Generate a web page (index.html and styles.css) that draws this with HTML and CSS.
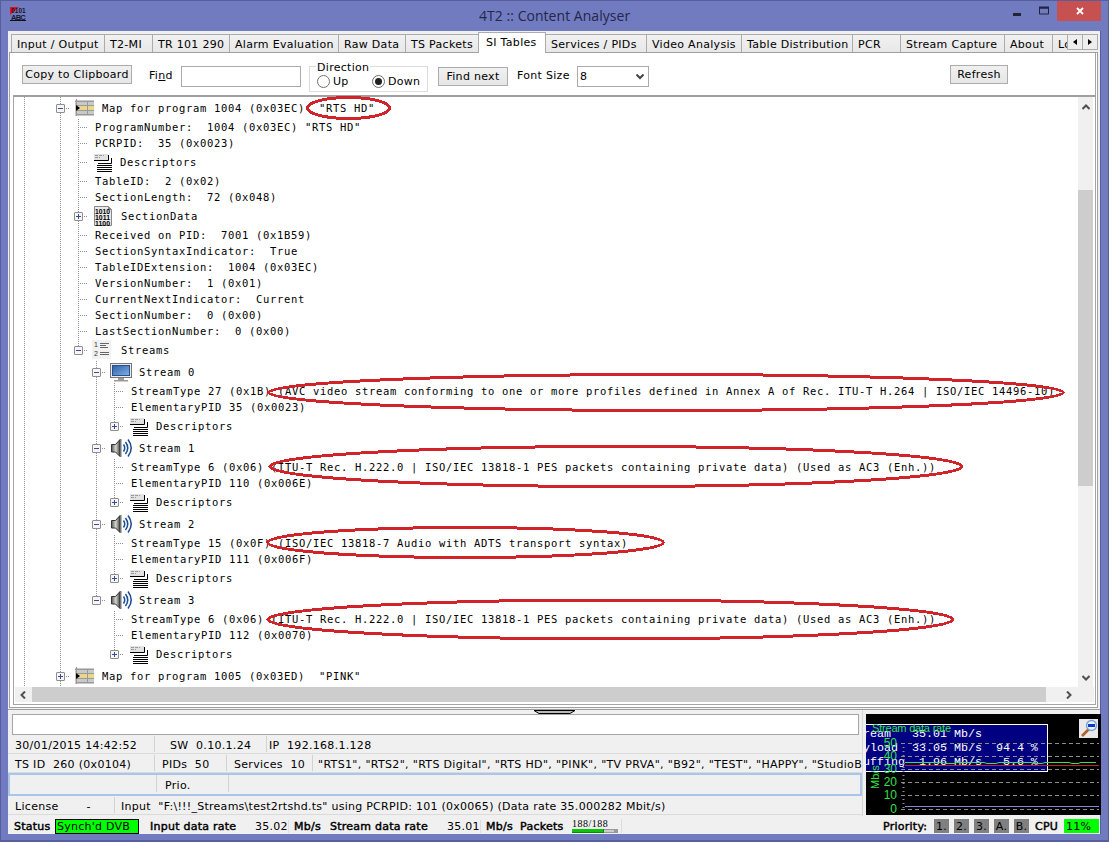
FILE: index.html
```html
<!DOCTYPE html>
<html lang="en">
<head>
<meta charset="utf-8">
<title>4T2 :: Content Analyser</title>
<link rel="stylesheet" href="styles.css">
</head>
<body>
<svg class="defs" width="0" height="0">
  <defs>
    <linearGradient id="scr" x1="0" y1="0" x2="1" y2="1"><stop offset="0" stop-color="#2f5fa8"/><stop offset="1" stop-color="#7fb0e6"/></linearGradient>
    <linearGradient id="spk" x1="0" y1="0" x2="1" y2="0"><stop offset="0" stop-color="#555"/><stop offset=".5" stop-color="#d5d8d2"/><stop offset="1" stop-color="#444"/></linearGradient>
    <symbol id="i-map" viewBox="0 0 33 22"><rect x="6" y="3" width="19" height="16" fill="#c9c9c9"/><rect x="8" y="9" width="17" height="4" fill="#ecd58c"/><path d="M6 4.500h19M7 8.500h18M7 13.500h18M7 17.500h18M7.500 2v17M18.500 4v14" stroke="#999" fill="none"/><path d="M7 8v6l4-3z" fill="#000"/></symbol>
    <symbol id="i-desc" viewBox="0 0 33 22"><path d="M7 3h14v7H7z" fill="#e2e2e2"/><path d="M8 4.500h9M8 6.500h5" stroke="#999" stroke-dasharray="3 1" fill="none"/><path d="M7 9.500h14.500V4" stroke="#000" fill="none"/><path d="M11 12.500h13.500V7" stroke="#000" fill="none"/><path d="M10 14.500h15M10 16.500h15M10 18.500h15M10 20.500h15" stroke="#000" fill="none"/></symbol>
    <symbol id="i-data" viewBox="0 0 33 22"><path d="M7.500 1.500h14l3 3v16h-17z" fill="#e9e9e9" stroke="#888"/><path d="M21 1v4h4z" fill="#888"/><g font-family="Liberation Sans" font-size="7.500" font-weight="bold" fill="#000" letter-spacing="0"><text x="8" y="8.500" textLength="15" lengthAdjust="spacingAndGlyphs">1010</text><text x="8" y="14.500" textLength="15" lengthAdjust="spacingAndGlyphs">1011</text><text x="8" y="20.500" textLength="15" lengthAdjust="spacingAndGlyphs">1100</text></g></symbol>
    <symbol id="i-list" viewBox="0 0 33 22"><path d="M5 1h19v19H5z" fill="#f1f1f1"/><g font-family="Liberation Sans" font-size="7" fill="#333"><text x="7" y="8">1</text><text x="7" y="17">2</text></g><path d="M13 4.500h9M13 6.500h6M13 8.500h8M13 13.500h9M13 15.500h9" stroke="#666" fill="none"/></symbol>
    <symbol id="i-mon" viewBox="0 0 33 22"><rect x="5.500" y="2.500" width="21" height="14" fill="#e8ebef" stroke="#777"/><rect x="7.500" y="4.500" width="17" height="10" fill="url(#scr)" stroke="#2a4f86"/><path d="M13 17h6v2h4v1.500H9V19h4z" fill="#9b9b9b"/></symbol>
    <symbol id="i-spk" viewBox="0 0 33 22"><path d="M6.500 7.500h4L15 2.500V19.500L10.500 15h-4z" fill="url(#spk)" stroke="#333"/><path d="M15 2h1.500v18H15z" fill="#777"/><path d="M18.500 7.500q2.500 3.500 0 7M20.500 5q4.500 6 0 12M23 2.500q6.500 8.500 0 17" stroke="#1d4b92" stroke-width="1.500" fill="none"/></symbol>
  </defs>
</svg>
<div class="window">
  <header class="titlebar">
    <svg class="appicon" width="17" height="16" viewBox="0 0 17 16"><path d="M0 0h9L0 8z" fill="#e0131c"/><path d="M0 13.500h16" stroke="#111"/><g font-family="Liberation Sans" font-size="6.500" font-weight="bold" fill="#17172b"><text x="1" y="5.500" textLength="15">0101</text><text x="1" y="12.500" font-size="7.500" textLength="15">ABC</text></g></svg>
    <h1>4T2 :: Content Analyser</h1>
    <svg class="winbtns" width="91" height="21" viewBox="0 0 91 21"><path d="M3 13h8v3H3z" fill="#22243c"/><path d="M29.500 8h9v6h-9z" fill="none" stroke="#22243c"/><path d="M29 7.500h10" stroke="#22243c" stroke-width="2"/><path d="M47 1h44v20H47z" fill="#c75050"/><path d="M67 8l6 6M73 8l-6 6" stroke="#fff" stroke-width="1.800"/></svg>
  </header>
  <main class="client">
    <nav class="tabs">
      <a class="w93">Input / Output</a><a class="w48">T2-MI</a><a class="w77">TR 101 290</a><a class="w109">Alarm Evaluation</a><a class="w67">Raw Data</a><a class="w73">TS Packets</a><a class="active">SI Tables</a><a class="w100">Services / PIDs</a><a class="w95">Video Analysis</a><a class="w111">Table Distribution</a><a class="w48">PCR</a><a class="w104">Stream Capture</a><a class="w48">About</a><a class="cut">Lo</a>
      <span class="spin"><b><svg width="4" height="6"><path d="M4 0v6L0 3z"/></svg></b><b><svg width="4" height="6"><path d="M0 0v6l4-3z"/></svg></b></span>
    </nav>
    <section class="panel">
      <div class="toolbar">
        <button class="copy">Copy to Clipboard</button>
        <label class="find">Fi<u>n</u>d</label>
        <span class="input"></span>
        <fieldset class="dir"><legend>Direction</legend><span class="radio"></span><span class="up">Up</span><span class="radio on"></span><span>Down</span></fieldset>
        <button class="next">Find next</button>
        <label class="fs">Font Size</label>
        <span class="select">8<svg width="8" height="6"><path d="M.500.500l3.500 3.500 3.500-3.500" fill="none" stroke="#444" stroke-width="2"/></svg></span>
        <button class="refresh">Refresh</button>
      </div>
      <div class="treebox">
        <div class="treemain">
          <div class="tree">
<div class="r b"><i class="v"></i><i></i><i class="v h"><s></s></i><svg><use href="#i-map"/></svg>Map for program 1004 (0x03EC)  "RTS HD"</div>
<div class="r"><i class="v"></i><i></i><i class="v"></i><i class="v h"></i><p>ProgramNumber:  1004 (0x03EC) "RTS HD"</p></div>
<div class="r"><i class="v"></i><i></i><i class="v"></i><i class="v h"></i><p>PCRPID:  35 (0x0023)</p></div>
<div class="r b"><i class="v"></i><i></i><i class="v"></i><i class="v h"></i><svg><use href="#i-desc"/></svg>Descriptors</div>
<div class="r"><i class="v"></i><i></i><i class="v"></i><i class="v h"></i><p>TableID:  2 (0x02)</p></div>
<div class="r"><i class="v"></i><i></i><i class="v"></i><i class="v h"></i><p>SectionLength:  72 (0x048)</p></div>
<div class="r b"><i class="v"></i><i></i><i class="v"></i><i class="v h"><s class="plus"></s></i><svg class="wide"><use href="#i-data"/></svg>SectionData</div>
<div class="r"><i class="v"></i><i></i><i class="v"></i><i class="v h"></i><p>Received on PID:  7001 (0x1B59)</p></div>
<div class="r"><i class="v"></i><i></i><i class="v"></i><i class="v h"></i><p>SectionSyntaxIndicator:  True</p></div>
<div class="r"><i class="v"></i><i></i><i class="v"></i><i class="v h"></i><p>TableIDExtension:  1004 (0x03EC)</p></div>
<div class="r"><i class="v"></i><i></i><i class="v"></i><i class="v h"></i><p>VersionNumber:  1 (0x01)</p></div>
<div class="r"><i class="v"></i><i></i><i class="v"></i><i class="v h"></i><p>CurrentNextIndicator:  Current</p></div>
<div class="r"><i class="v"></i><i></i><i class="v"></i><i class="v h"></i><p>SectionNumber:  0 (0x00)</p></div>
<div class="r"><i class="v"></i><i></i><i class="v"></i><i class="v h"></i><p>LastSectionNumber:  0 (0x00)</p></div>
<div class="r b"><i class="v"></i><i></i><i class="v"></i><i class="v e h"><s></s></i><svg class="wide"><use href="#i-list"/></svg>Streams</div>
<div class="r b"><i class="v"></i><i></i><i class="v"></i><i></i><i class="v h"><s></s></i><svg class="wide"><use href="#i-mon"/></svg>Stream 0</div>
<div class="r"><i class="v"></i><i></i><i class="v"></i><i></i><i class="v"></i><i class="v h"></i><p>StreamType 27 (0x1B) (AVC video stream conforming to one or more profiles defined in Annex A of Rec. ITU-T H.264 | ISO/IEC 14496-10)</p></div>
<div class="r"><i class="v"></i><i></i><i class="v"></i><i></i><i class="v"></i><i class="v h"></i><p>ElementaryPID 35 (0x0023)</p></div>
<div class="r b"><i class="v"></i><i></i><i class="v"></i><i></i><i class="v"></i><i class="v e h"><s class="plus"></s></i><svg><use href="#i-desc"/></svg>Descriptors</div>
<div class="r b"><i class="v"></i><i></i><i class="v"></i><i></i><i class="v h"><s></s></i><svg class="wide"><use href="#i-spk"/></svg>Stream 1</div>
<div class="r"><i class="v"></i><i></i><i class="v"></i><i></i><i class="v"></i><i class="v h"></i><p>StreamType 6 (0x06) (ITU-T Rec. H.222.0 | ISO/IEC 13818-1 PES packets containing private data) (Used as AC3 (Enh.))</p></div>
<div class="r"><i class="v"></i><i></i><i class="v"></i><i></i><i class="v"></i><i class="v h"></i><p>ElementaryPID 110 (0x006E)</p></div>
<div class="r b"><i class="v"></i><i></i><i class="v"></i><i></i><i class="v"></i><i class="v e h"><s class="plus"></s></i><svg><use href="#i-desc"/></svg>Descriptors</div>
<div class="r b"><i class="v"></i><i></i><i class="v"></i><i></i><i class="v h"><s></s></i><svg class="wide"><use href="#i-spk"/></svg>Stream 2</div>
<div class="r"><i class="v"></i><i></i><i class="v"></i><i></i><i class="v"></i><i class="v h"></i><p>StreamType 15 (0x0F) (ISO/IEC 13818-7 Audio with ADTS transport syntax)</p></div>
<div class="r"><i class="v"></i><i></i><i class="v"></i><i></i><i class="v"></i><i class="v h"></i><p>ElementaryPID 111 (0x006F)</p></div>
<div class="r b"><i class="v"></i><i></i><i class="v"></i><i></i><i class="v"></i><i class="v e h"><s class="plus"></s></i><svg><use href="#i-desc"/></svg>Descriptors</div>
<div class="r b"><i class="v"></i><i></i><i class="v"></i><i></i><i class="v e h"><s></s></i><svg class="wide"><use href="#i-spk"/></svg>Stream 3</div>
<div class="r"><i class="v"></i><i></i><i class="v"></i><i></i><i></i><i class="v h"></i><p>StreamType 6 (0x06) (ITU-T Rec. H.222.0 | ISO/IEC 13818-1 PES packets containing private data) (Used as AC3 (Enh.))</p></div>
<div class="r"><i class="v"></i><i></i><i class="v"></i><i></i><i></i><i class="v h"></i><p>ElementaryPID 112 (0x0070)</p></div>
<div class="r b"><i class="v"></i><i></i><i class="v"></i><i></i><i></i><i class="v e h"><s class="plus"></s></i><svg><use href="#i-desc"/></svg>Descriptors</div>
<div class="r b"><i class="v"></i><i></i><i class="v h"><s class="plus"></s></i><svg><use href="#i-map"/></svg>Map for program 1005 (0x03ED)  "PINK"</div>
          </div>
          <div class="vbar"><svg width="8" height="6"><path d="M.500 5l3.500-3.500L7.500 5"/></svg><span></span><svg width="8" height="6"><path d="M.500 1l3.500 3.500L7.500 1"/></svg></div>
        </div>
        <div class="hbar"><svg width="6" height="8"><path d="M5 .500L1.500 4 5 7.500"/></svg><span></span><svg width="6" height="8"><path d="M1 .500L4.500 4 1 7.500"/></svg></div>
      </div>
    </section>
    <section class="bottom">
      <div class="left">
        <div class="grip"><svg width="41" height="4"><path d="M0 .500h41L36 3.500H5z" fill="#bbb" stroke="#000"/></svg></div>
        <div class="msg"></div>
        <div class="st s1"><span class="w147">30/01/2015 14:42:52</span><span class="w112 sw">SW&nbsp; 0.10.1.24</span><span class="ip">IP&nbsp; 192.168.1.128</span></div>
        <div class="st s2"><span class="w147">TS ID&nbsp; 260 (0x0104)</span><span class="w72">PIDs&nbsp; 50</span><span class="w86">Services&nbsp; 10</span><span class="svc">"RTS1", "RTS2", "RTS Digital", "RTS HD", "PINK", "TV PRVA", "B92", "TEST", "HAPPY", "StudioB</span></div>
        <div class="st s3"><span class="w146"></span><span class="w72">Prio.</span><span></span></div>
        <div class="st s4"><span class="w107">License<em>-</em></span><span class="inp">Input&nbsp; "F:\!!!_Streams\test2rtshd.ts" using PCRPID: 101 (0x0065) (Data rate 35.000282 Mbit/s)</span></div>
      </div>
      <svg class="graph" width="235" height="101" viewBox="866 714 235 101">
        <rect x="866" y="714" width="235" height="101" fill="#000"/>
        <rect x="860" y="724.500" width="187.500" height="47" fill="#000080" stroke="#fff"/>
        <g class="mono" fill="#fff"><text x="849" y="737">Stream&nbsp;&nbsp; 35.01 Mb/s</text><text x="849" y="751">Payload&nbsp; 33.05 Mb/s&nbsp; 94.4 %</text><text x="849" y="765">Stuffing&nbsp; 1.96 Mb/s&nbsp;&nbsp; 5.6 %</text></g>
        <path d="M901 743.500h198M901 756.500h198M901 769.500h198M901 782.500h198M901 795.500h198M901 809.500h198" stroke="#8c8c8c" stroke-dasharray="4 3"/>
        <path d="M903.500 743v67" stroke="#8c8c8c" stroke-width="2" stroke-dasharray="1 3"/>
        <path d="M905 765.500h194" stroke="#c81e1e"/>
        <path d="M905 762.500h38l3 1h8l3-1h27l3 1h9l3-1h32l3 1h8l3-1h24l3 1h6l3-1h15" stroke="#3fe04d" fill="none"/>
        <path d="M905 806.500h194" stroke="#8585dc"/>
        <g class="axis" fill="#35e045"><text x="872" y="732" font-size="11" textLength="79">Stream data rate</text><g font-size="12" text-anchor="end"><text x="897" y="747">50</text><text x="897" y="760">40</text><text x="897" y="773">30</text><text x="897" y="786">20</text><text x="897" y="799">10</text><text x="897" y="813">0</text></g><text transform="translate(879 789) rotate(-90)" font-size="11">Mb/s</text></g>
        <path d="M1079 719h19v19h-19z" fill="#e9e9ec"/><path d="M1082 736l7-7" stroke="#b0602a" stroke-width="2.600"/><circle cx="1091.500" cy="725.500" r="5" fill="#e8f2ff" stroke="#7d9fd8" stroke-width="1.300"/><path d="M1088 724h7v3h-7z" fill="#1238c8"/>
      </svg>
    </section>
    <footer class="foot">
      <strong class="f1">Status</strong><span class="sync">Synch'd DVB</span><strong class="f2">Input data rate</strong><span class="f3">35.02</span><strong class="f4">Mb/s</strong><strong class="f5">Stream data rate</strong><span class="f6">35.01</span><strong class="f7">Mb/s</strong><strong class="f8">Packets</strong>
      <span class="pk">188/188<svg width="46" height="4"><path d="M0 0h46v4H0z" fill="#999"/><path d="M32 1h10v2H32z" fill="#ccc"/><path d="M0 0h32v4H0z" fill="#078a07"/><path d="M0 0h31v3H0z" fill="#0cc50c"/></svg></span>
      <strong class="f9">Priority:</strong><span class="pr">1.</span><span class="pr">2.</span><span class="pr">3.</span><span class="pr">A.</span><span class="pr">B.</span><strong class="f10">CPU</strong><span class="cpu">11%</span>
    </footer>
  </main>
  <svg class="marks" width="1109" height="842" fill="none" stroke="#d1232a" stroke-width="3">
    <ellipse cx="348.500" cy="108" rx="41" ry="10.500"/><ellipse cx="666" cy="392.500" rx="397.500" ry="18"/><ellipse cx="616" cy="466.500" rx="346" ry="20"/><ellipse cx="465.500" cy="542.500" rx="198" ry="15"/><ellipse cx="610.500" cy="619.500" rx="342.500" ry="19.500"/>
  </svg>
</div>
</body>
</html>
```
FILE: styles.css
```css
* { box-sizing: border-box; }
body { margin: 0; font: 11px "DejaVu Sans", sans-serif; letter-spacing: .3px; color: #000; }
.defs { position: absolute; }
.window { position: relative; width: 1109px; height: 842px; background: #717bc0; border: solid #565f9c; border-width: 1px 1px 2px; padding: 0 7px 6px; display: flex; flex-direction: column; overflow: hidden; }
.titlebar { height: 30px; flex: none; display: flex; align-items: flex-start; }
.appicon { margin: 6px 0 0 2px; flex: none; }
.titlebar h1 { margin: 5px 0 0; flex: 1; padding-left: 452px; font: 14px/20px "Open Sans", sans-serif; letter-spacing: .04px; color: #25264a; white-space: nowrap; }
.winbtns { margin: -1px 0 0; flex: none; }
.client { flex: 1; min-height: 0; background: #f0f0f0; display: flex; flex-direction: column; border-right: 1px solid #555f9c; }

.tabs { height: 21px; flex: none; display: flex; align-items: flex-end; padding-left: 3px; margin-right: 2px; }
.tabs a { flex: none; height: 18px; border: solid #acacac; border-width: 1px 0 0 1px; padding-left: 5px; line-height: 19px; white-space: nowrap; background: linear-gradient(#f1f1f1, #e8e8e8); }
.tabs .active { width: 68px; height: 21px; background: #fff; padding-left: 7px; line-height: 19px; border-right-width: 1px; margin-bottom: -1px; position: relative; }
.tabs .active + a { border-left: 0; }
.w93 { width: 93px; } .w48 { width: 48px; } .w77 { width: 77px; } .w109 { width: 109px; } .w67 { width: 67px; } .w73 { width: 73px; }
.w100 { width: 100px; } .w95 { width: 95px; } .w111 { width: 111px; } .w104 { width: 104px; }
.tabs .cut { width: 15px; overflow: hidden; }
.spin { display: flex; height: 18px; padding-bottom: 2px; }
.spin b { width: 16px; height: 16px; border: 1px solid #acacac; background: #eee; display: flex; align-items: center; justify-content: center; }
.spin b + b { margin-left: -1px; }

.panel { flex: none; width: 1089px; height: 656px; margin-left: 1px; border: 1px solid #a0a0a0; background: #fff; padding: 0 1px 2px 3px; display: flex; flex-direction: column; }
.toolbar { height: 42px; flex: none; display: flex; align-items: flex-start; padding: 12px 0 0 9px; border-right: 1px solid #a5a5a5; white-space: nowrap; }
button { flex: none; font: inherit; letter-spacing: inherit; color: #000; background: linear-gradient(#f0f0f0, #e6e6e6); border: 1px solid #acacac; padding: 0; height: 19px; line-height: 18px; }
.copy { width: 110px; }
.find { width: 49px; padding: 4px 0 0 17px; }
.input { width: 120px; height: 21px; margin-top: 1px; border: 1px solid #ababab; }
.dir { width: 119px; height: 26px; margin: 1px 0 0 8px; border: 1px solid #dcdcdc; display: flex; align-items: center; position: relative; min-width: 0; padding: 4px 0 0 7px; }
.dir legend { position: absolute; top: -6px; left: 6px; background: #fff; padding: 0 1px; line-height: 13px; }
.radio { flex: none; width: 13px; height: 13px; border: 1px solid #707070; border-radius: 50%; display: flex; margin-right: 3px; }
.on::after { content: ""; width: 7px; height: 7px; margin: 2px; border-radius: 50%; background: #222; }
.up { width: 39px; }
.next { width: 70px; margin: 2px 0 0 10px; }
.fs { padding: 4px 0 0 9px; width: 69px; }
.select { width: 72px; height: 21px; margin-top: 1px; border: 1px solid #ababab; display: flex; justify-content: space-between; align-items: center; padding: 0 4px 0 2px; }
.refresh { width: 58px; margin-left: 301px; }

.treebox { flex: 1; min-height: 0; border: 1px solid #a5a5a5; border-top: 2px solid #a0a0a0; padding: 0 1px; display: flex; flex-direction: column; }
.treemain { height: 590px; flex: none; display: flex; }
.tree { flex: 1; min-width: 0; overflow: hidden; display: flex; flex-direction: column; font: 10.5px "DejaVu Sans Mono", monospace; letter-spacing: .679px; white-space: pre; }
.r { flex: none; display: flex; height: 16px; line-height: 16px; }
.b { height: 22px; line-height: 22px; }
.r i { flex: none; width: 18px; position: relative; }
.v { background: linear-gradient(#909090 50%, transparent 50%) 9px 0 / 1px 2px repeat-y; }
.e { background: none; }
.e::before { content: ""; position: absolute; left: 9px; top: 0; width: 1px; height: 11px; background: linear-gradient(#909090 50%, transparent 50%) 0 0 / 1px 2px; }
.h::after { content: ""; position: absolute; left: 11px; right: 0; top: 50%; height: 1px; background: linear-gradient(90deg, #909090 50%, transparent 50%) 0 0 / 2px 1px; }
.r s { position: absolute; z-index: 1; left: 5px; top: 7px; width: 9px; height: 9px; border: 1px solid #8e8e8e; border-radius: 1px; background: linear-gradient(#3a4a9a, #3a4a9a) center / 5px 1px no-repeat #f6f6f6; }
.r .plus { background: linear-gradient(#3a4a9a, #3a4a9a) center / 5px 1px no-repeat, linear-gradient(#3a4a9a, #3a4a9a) center / 1px 5px no-repeat #f6f6f6; }
.r p { margin: 0 0 0 8px; }
.r svg { flex: none; width: 33px; height: 22px; }
.r .wide { margin-right: 1px; }
.vbar { width: 16px; border-right: 1px solid #fff; flex: none; background: #f0f0f0; display: flex; flex-direction: column; align-items: center; padding: 7px 0 6px; }
.vbar span { width: 15px; height: 296px; margin: 80px 0 auto; background: #cdcdcd; }
.hbar { height: 15px; flex: none; background: #f0f0f0; display: flex; align-items: center; padding: 0 22px 0 5px; }
.hbar span { width: 1014px; height: 15px; margin: 0 auto 0 6px; background: #cdcdcd; }
.vbar path, .hbar path { fill: none; stroke: #505050; stroke-width: 2; }

.bottom { flex: none; height: 107px; display: flex; border-top: 1px solid #a0a0a0; margin-top: 1px; }
.left { width: 855px; flex: none; border-right: 1px solid #d7d7d7; display: flex; flex-direction: column; white-space: nowrap; overflow: hidden; }
.grip { height: 4px; padding-left: 526px; display: flex; }
.msg { height: 21px; margin: 0 3px 0 4px; background: #fff; border: 1px solid #a5a5a5; }
.st { display: flex; height: 19px; border-bottom: 1px solid #dadada; padding: 1px 0; }
.st span { flex: none; line-height: 20px; height: 16px; padding-left: 7px; border-left: 1px solid #d2d2d2; }
.st span:first-child { border-left: 0; }
.w147, .w146 { width: 146px; } .w112 { width: 112px; } .w72 { width: 72px; } .w86 { width: 86px; } .w107 { width: 106px; }
.st .sw { padding-left: 15px; }
.st .ip { padding-left: 2px; }
.st .svc { padding-left: 5px; letter-spacing: .34px; }
.s3 { height: 23px; border: 2px solid #a9c6e8; padding: 0; }
.s3 span { line-height: 22px; height: 17px; padding-left: 8px; }
.s4 em { font-style: normal; margin-left: 28px; }
.st .inp { padding-left: 6px; letter-spacing: .27px; }
.graph { margin: 4px 0 0 3px; flex: none; }
.mono { font: 11.67px "Liberation Mono", monospace; letter-spacing: 0; }
.axis { font-family: "Liberation Sans", sans-serif; letter-spacing: 0; }

.foot { flex: 1; display: flex; align-items: center; white-space: nowrap; padding: 2px 0 0 6px; letter-spacing: .25px; }
.foot > * { flex: none; }
.foot strong { font-weight: normal; -webkit-text-stroke: .45px #000; }
.f1 { width: 41px; }
.sync { width: 84px; height: 15px; line-height: 14px; border: 1px solid #000; background: #0f0; padding-left: 1px; margin-right: 11px; }
.f2 { width: 105px; } .f3 { width: 34px; border-right: 1px solid #ddd; margin-right: 5px; } .f4 { width: 36px; } .f5 { width: 117px; }
.f6 { width: 34px; border-right: 1px solid #ddd; margin-right: 5px; } .f7 { width: 34px; } .f8 { width: 52px; }
.pk { width: 50px; font: 10px/10px "Liberation Serif", serif; letter-spacing: .5px; border-right: 1px solid #ddd; display: flex; flex-direction: column; }
.f9 { width: 51px; margin-left: 261px; }
.pr { width: 15px; height: 14px; line-height: 15px; text-align: center; margin-right: 5px; background: #808080; }
.f10 { width: 28px; margin-left: 1px; }
.cpu { width: 35px; height: 14px; line-height: 15px; background: #0f0; padding-left: 2px; margin-left: 1px; }
.marks { position: absolute; left: -1px; top: -1px; shape-rendering: crispEdges; pointer-events: none; }
```
